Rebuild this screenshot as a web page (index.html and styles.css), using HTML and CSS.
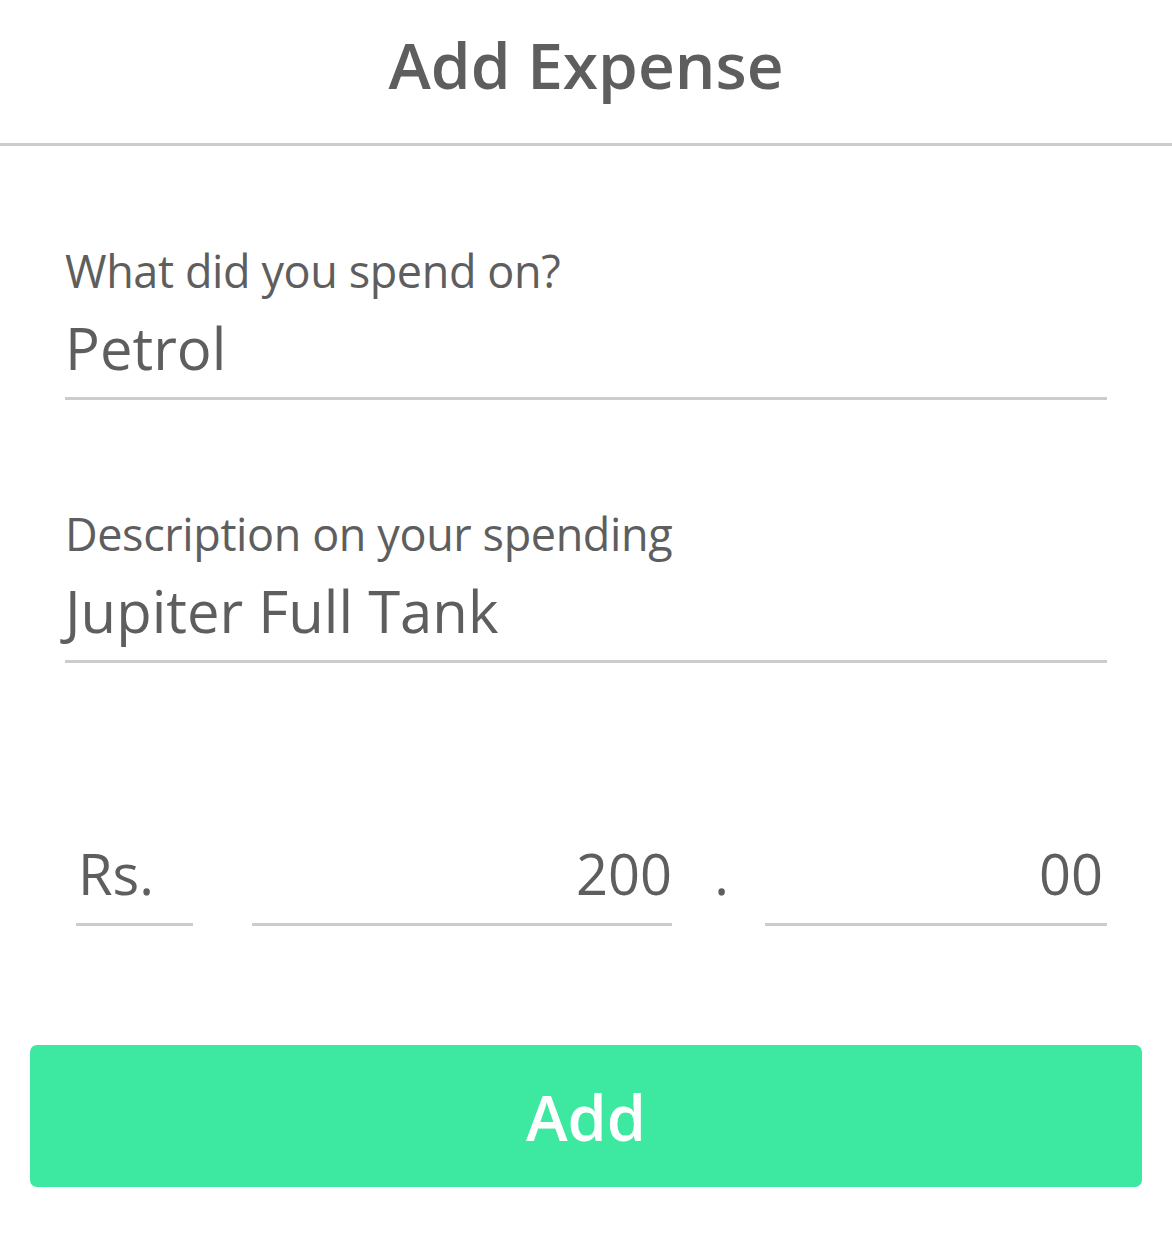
FILE: index.html
```html
<!DOCTYPE html>
<html>
<head>
<meta charset="utf-8">
<link rel="stylesheet" href="styles.css">
</head>
<body>
<header class="header"><h1 class="title">Add Expense</h1></header>
<main class="form">
  <div class="field first">
    <div class="label">What did you spend on?</div>
    <div class="value">Petrol</div>
  </div>
  <div class="field second">
    <div class="label">Description on your spending</div>
    <div class="value">Jupiter Full Tank</div>
  </div>
  <div class="amount">
    <div class="amt currency">Rs.</div>
    <div class="amt whole">200</div>
    <div class="dot">.</div>
    <div class="amt cents">00</div>
  </div>
</main>
<div class="actions"><button class="add-btn">Add</button></div>
</body>
</html>
```
FILE: styles.css
```css
html, body { margin: 0; padding: 0; background: #fff; }
body { font-family: "Open Sans", "DejaVu Sans", sans-serif; color: #5e5e5e; }
.header {
  height: 143px;
  box-sizing: border-box;
  padding-bottom: 14px;
  display: flex;
  align-items: center;
  justify-content: center;
  border-bottom: 3px solid #cccccc;
}
.title { margin: 0; font-size: 64px; font-weight: 600; color: #5e5e5e; line-height: 1; }
.header { height: 146px; }
.form { padding: 0 65px; }
.field.first { margin-top: 97px; }
.field.second { margin-top: 106px; }
.label { font-size: 45px; line-height: 56px; letter-spacing: -0.4px; }
.value {
  margin-top: 14px;
  font-size: 58px;
  line-height: 70px;
  padding-bottom: 14px;
  border-bottom: 3px solid #cccccc;
}
.amount { display: flex; align-items: flex-end; margin-top: 176px; margin-left: 11px; }
.amt {
  font-size: 56px;
  line-height: 68px;
  padding-bottom: 16px;
  border-bottom: 3px solid #cccccc;
}
.currency { width: 117px; padding-left: 2px; box-sizing: border-box; }
.whole { width: 420px; margin-left: 59px; text-align: right; }
.dot { width: 93px; padding-left: 6px; box-sizing: border-box; text-align: center; font-size: 56px; line-height: 68px; padding-bottom: 19px; }
.cents { flex: 1; text-align: right; padding-right: 4px; }
.actions { padding: 0 30px; margin-top: 119px; }
.add-btn {
  width: 100%;
  height: 142px;
  border: none;
  border-radius: 7px;
  background: #3de8a0;
  color: #fff;
  font-family: "Open Sans", "DejaVu Sans", sans-serif;
  font-size: 63px;
  font-weight: 600;
  padding: 0;
}
```
